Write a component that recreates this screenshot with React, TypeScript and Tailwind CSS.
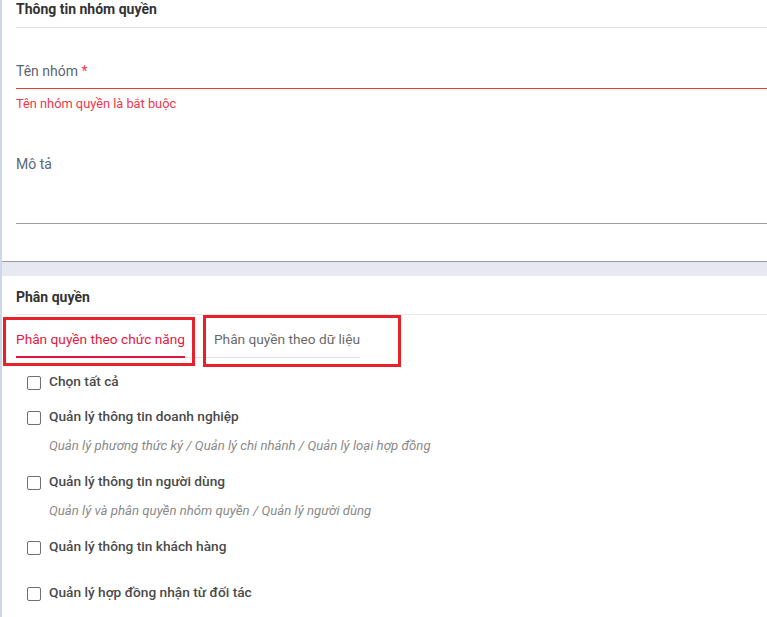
import React from "react";

function Checkbox() {
  return (
    <span className="mt-[5px] block h-[14px] w-[14px] shrink-0 rounded-[2px] border-[1.5px] border-[#6f6f6f] bg-white" />
  );
}

function Row({ label, className = "" }: { label: string; className?: string }) {
  return (
    <div className={"flex items-start gap-[8px] pl-[11px] " + className}>
      <Checkbox />
      <span className="text-[13.7px] leading-[20px] font-medium text-[#4a4a4a]">{label}</span>
    </div>
  );
}

function Sub({ text, className = "" }: { text: string; className?: string }) {
  return (
    <div className={"pl-[33px] text-[13.2px] leading-[18px] italic text-[#8a8a8a] " + className}>{text}</div>
  );
}

export default function App() {
  return (
    <div className="relative h-[617px] w-[767px] overflow-hidden border-l-2 border-[#cdd7e9] bg-white font-['Roboto','Liberation_Sans',sans-serif]">
      {/* Card 1 */}
      <div className="pl-[14px]">
        <div className="h-[28px] border-b border-[#dedede] text-[14px] font-bold leading-[18px] text-[#333]">
          Thông tin nhóm quyền
        </div>
        <div className="mt-[33px] text-[14px] leading-[20px] text-[#5c6674]">
          Tên nhóm <span className="text-[#f0374b]">*</span>
        </div>
        <div className="h-[8px] border-b border-[#f23b3b]" />
        <div className="mt-[6px] text-[12.8px] leading-[18px] text-[#f0374b]">Tên nhóm quyền là bắt buộc</div>
        <div className="mt-[41px] text-[14px] leading-[20px] text-[#5c6674]">Mô tả</div>
        <div className="h-[50px] border-b border-[#9e9e9e]" />
        <div className="h-[37px]" />
      </div>
      <div className="h-[15px] border-t border-[#9a9a9a] bg-[#e6e9f2]" />

      {/* Card 2 */}
      <div className="pl-[14px]">
        <div className="border-b border-[#e8e8e8] pb-[8px] pt-[12px] text-[14px] font-bold leading-[18px] text-[#333]">
          Phân quyền
        </div>
        <div className="inline-flex gap-[29px] border-b border-[#e3e3e3]">
          <div className="-mb-px border-b-2 border-[#e3173e] pb-[7px] pt-[14px] text-[13.7px] leading-[20px] text-[#e3173e]">
            Phân quyền theo chức năng
          </div>
          <div className="-mb-px border-b-2 border-transparent pb-[7px] pt-[14px] text-[13.7px] leading-[20px] text-[#6a6a6a]">
            Phân quyền theo dữ liệu
          </div>
        </div>

        <div className="flex flex-col">
          <Row label="Chọn tất cả" className="mt-[13px]" />
          <Row label="Quản lý thông tin doanh nghiệp" className="mt-[15px]" />
          <Sub text="Quản lý phương thức ký / Quản lý chi nhánh / Quản lý loại hợp đồng" className="mt-[11px]" />
          <Row label="Quản lý thông tin người dùng" className="mt-[16px]" />
          <Sub text="Quản lý và phân quyền nhóm quyền / Quản lý người dùng" className="mt-[11px]" />
          <Row label="Quản lý thông tin khách hàng" className="mt-[16px]" />
          <Row label="Quản lý hợp đồng nhận từ đối tác" className="mt-[26px]" />
        </div>
      </div>

      {/* Annotation boxes */}
      <div className="pointer-events-none absolute left-[1px] top-[317px] h-[49px] w-[192px] border-[3px] border-[#e8202a]" />
      <div className="pointer-events-none absolute left-[201px] top-[315px] h-[52px] w-[198px] border-[3px] border-[#e8202a]" />
    </div>
  );
}
